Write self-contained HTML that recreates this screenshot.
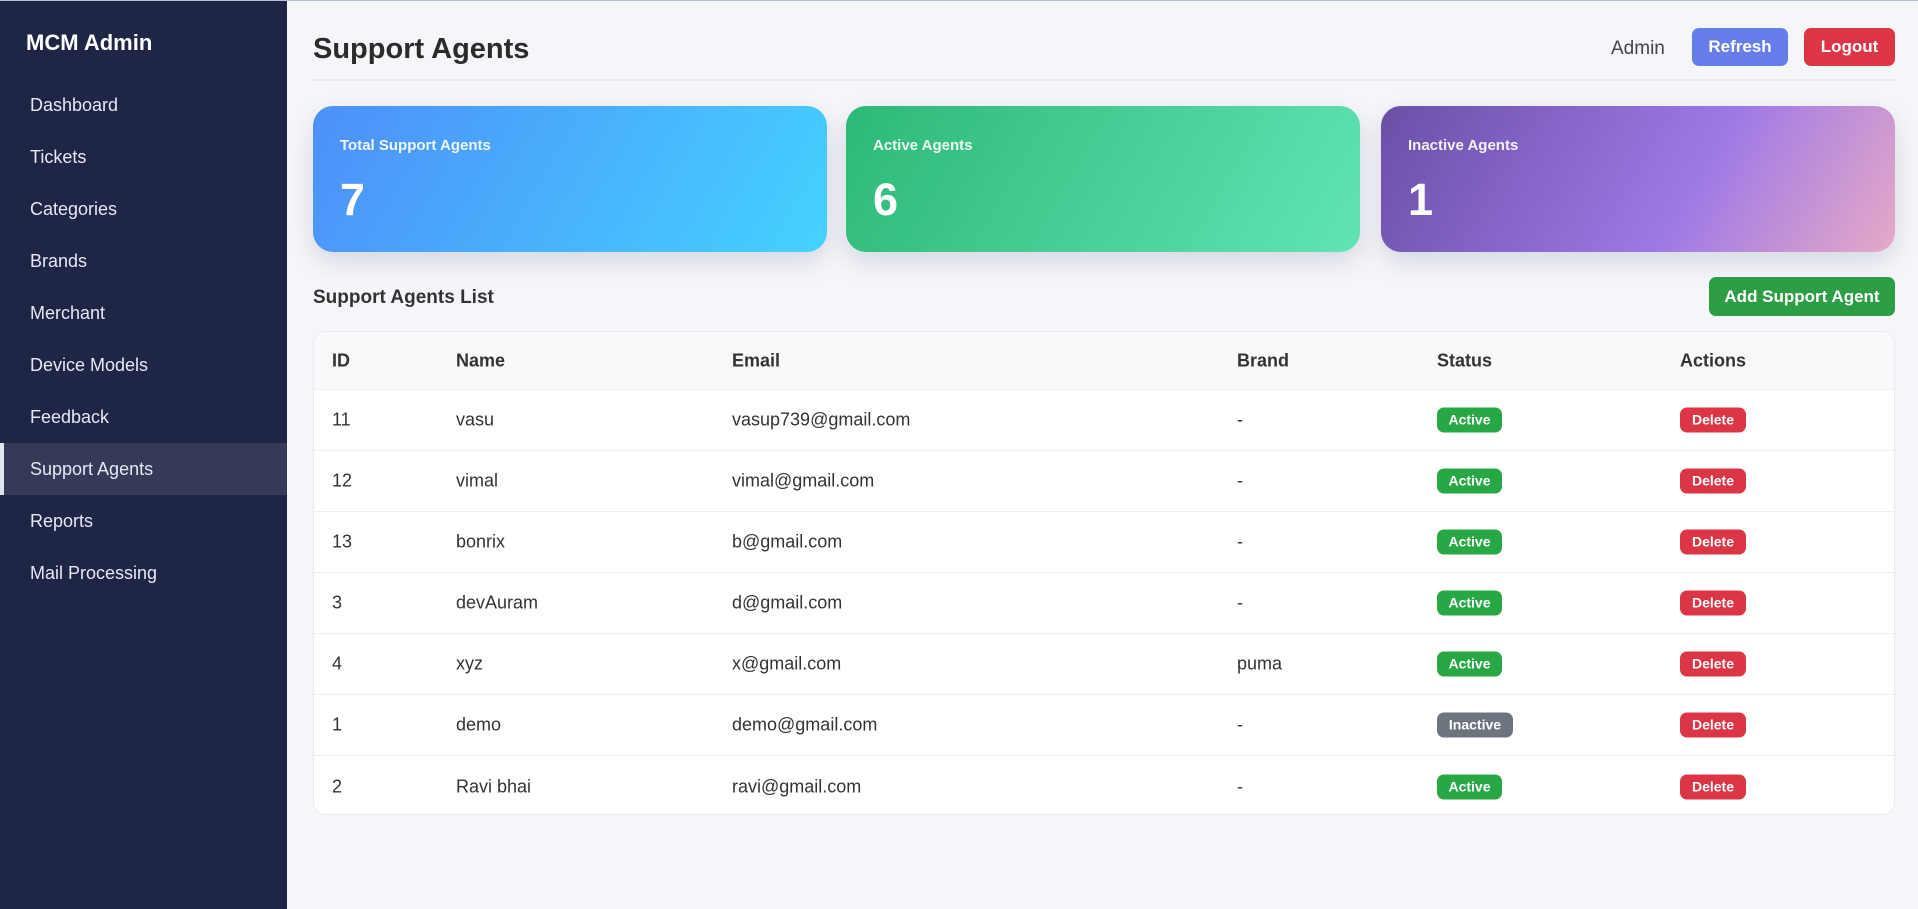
<!DOCTYPE html>
<html><head><meta charset="utf-8"><style>
*{box-sizing:border-box;margin:0;padding:0}
body{width:1918px;height:908px;overflow:hidden;background:#f5f6fa;font-family:"Liberation Sans",sans-serif;color:#333;position:relative;border-top:1px solid #b8c2d6}
.side{position:absolute;left:0;top:0;width:287px;height:908px;background:#1f2544}
.side h1{position:absolute;left:26px;top:29px;color:#fff;font-size:22px;font-weight:bold}
.nav{position:absolute;top:78px;left:0;width:287px}
.nav div{height:52px;line-height:52px;padding-left:30px;color:#e6e9f5;font-size:18px}
.nav div.act{background:#343a58;border-left:4px solid #e0e4f0;padding-left:26px}
.title{position:absolute;left:313px;top:32px;font-size:29px;font-weight:bold;color:#2b2b2b}
.hr{position:absolute;left:313px;top:78px;width:1582px;height:2px;background:#e6e8ee}
.admin{position:absolute;left:1611px;top:37px;font-size:19px;color:#444}
.btn{position:absolute;color:#fff;font-weight:bold;font-size:17px;border-radius:7px;text-align:center;font-family:"Liberation Sans",Arial,sans-serif}
.card{position:absolute;top:105px;height:146px;width:514px;border-radius:20px;color:#fff;box-shadow:0 10px 25px rgba(40,50,90,.15)}
.card .l{position:absolute;left:27px;top:31px;font-size:15px;font-weight:bold;opacity:.92}
.card .n{position:absolute;left:27px;top:68px;font-size:45px;font-weight:bold}
.lt{position:absolute;left:313px;top:286px;font-size:19px;font-weight:bold;color:#333}
.tbl{position:absolute;left:313px;top:330px;width:1582px;height:484px;background:#fff;border:1px solid #e8eaef;border-radius:12px;overflow:hidden}
.row{position:absolute;left:0;width:100%;height:61px;border-bottom:1px solid #eceef2;font-size:18px;color:#333}
.row span{position:absolute;top:50%;transform:translateY(-50%)}
.hd{background:#f8f9fb;height:58px;font-weight:bold}
.b{color:#fff;font-size:14px;font-weight:bold;height:25px;line-height:25px;border-radius:7px;text-align:center}
</style></head><body>
<div class="side"><h1>MCM Admin</h1>
<div class="nav"><div>Dashboard</div><div>Tickets</div><div>Categories</div><div>Brands</div><div>Merchant</div><div>Device Models</div><div>Feedback</div><div class="act">Support Agents</div><div>Reports</div><div>Mail Processing</div></div></div>
<div class="title">Support Agents</div>
<div class="admin">Admin</div>
<div class="btn" style="left:1692px;top:27px;width:96px;height:38px;line-height:38px;background:#677eea">Refresh</div>
<div class="btn" style="left:1804px;top:27px;width:91px;height:38px;line-height:38px;background:#dc3545">Logout</div>
<div class="hr"></div>
<div class="card" style="left:313px;background:linear-gradient(120deg,#4d8ff9,#45d2ff)"><div class="l">Total Support Agents</div><div class="n">7</div></div>
<div class="card" style="left:846px;background:linear-gradient(120deg,#2db877,#62e4b6)"><div class="l">Active Agents</div><div class="n">6</div></div>
<div class="card" style="left:1381px;background:linear-gradient(120deg,#6a4fa6,#9e79e6 60%,#e6aac6)"><div class="l">Inactive Agents</div><div class="n">1</div></div>
<div class="lt">Support Agents List</div>
<div class="btn" style="left:1709px;top:276px;width:186px;height:39px;line-height:39px;background:#2e9e46">Add Support Agent</div>
<div class="tbl">
<div class="row hd" style="top:0"><span style="left:18px">ID</span><span style="left:142px">Name</span><span style="left:418px">Email</span><span style="left:923px">Brand</span><span style="left:1123px">Status</span><span style="left:1366px">Actions</span></div>
<div class="row" style="top:58px"><span style="left:18px">11</span><span style="left:142px">vasu</span><span style="left:418px">vasup739@gmail.com</span><span style="left:923px">-</span><span class="b" style="left:1123px;width:65px;background:#28a745">Active</span><span class="b" style="left:1366px;width:66px;background:#dc3545">Delete</span></div>
<div class="row" style="top:119px"><span style="left:18px">12</span><span style="left:142px">vimal</span><span style="left:418px">vimal@gmail.com</span><span style="left:923px">-</span><span class="b" style="left:1123px;width:65px;background:#28a745">Active</span><span class="b" style="left:1366px;width:66px;background:#dc3545">Delete</span></div>
<div class="row" style="top:180px"><span style="left:18px">13</span><span style="left:142px">bonrix</span><span style="left:418px">b@gmail.com</span><span style="left:923px">-</span><span class="b" style="left:1123px;width:65px;background:#28a745">Active</span><span class="b" style="left:1366px;width:66px;background:#dc3545">Delete</span></div>
<div class="row" style="top:241px"><span style="left:18px">3</span><span style="left:142px">devAuram</span><span style="left:418px">d@gmail.com</span><span style="left:923px">-</span><span class="b" style="left:1123px;width:65px;background:#28a745">Active</span><span class="b" style="left:1366px;width:66px;background:#dc3545">Delete</span></div>
<div class="row" style="top:302px"><span style="left:18px">4</span><span style="left:142px">xyz</span><span style="left:418px">x@gmail.com</span><span style="left:923px">puma</span><span class="b" style="left:1123px;width:65px;background:#28a745">Active</span><span class="b" style="left:1366px;width:66px;background:#dc3545">Delete</span></div>
<div class="row" style="top:363px"><span style="left:18px">1</span><span style="left:142px">demo</span><span style="left:418px">demo@gmail.com</span><span style="left:923px">-</span><span class="b" style="left:1123px;width:76px;background:#6c757d">Inactive</span><span class="b" style="left:1366px;width:66px;background:#dc3545">Delete</span></div>
<div class="row" style="top:424px;border-bottom:none"><span style="left:18px">2</span><span style="left:142px">Ravi bhai</span><span style="left:418px">ravi@gmail.com</span><span style="left:923px">-</span><span class="b" style="left:1123px;width:65px;background:#28a745">Active</span><span class="b" style="left:1366px;width:66px;background:#dc3545">Delete</span></div>
</div>
</body></html>
